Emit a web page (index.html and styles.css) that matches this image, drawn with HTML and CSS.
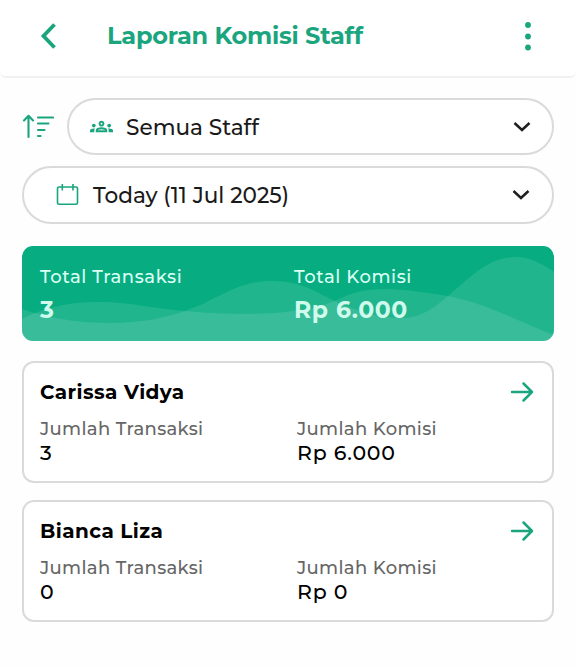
FILE: index.html
```html
<!DOCTYPE html>
<html lang="id">
<head>
<meta charset="utf-8">
<title>Laporan Komisi Staff</title>
<link rel="stylesheet" href="styles.css">
</head>
<body>
<header class="topbar">
  <svg class="back" width="18" height="28" viewBox="0 0 18 28"><path d="M15.500 2.500 4.500 14l11 11.500"/></svg>
  <h1>Laporan Komisi Staff</h1>
  <svg class="more" width="8" height="30" viewBox="0 0 8 30"><circle cx="4" cy="4" r="2.9"/><circle cx="4" cy="15.500" r="2.9"/><circle cx="4" cy="26.500" r="2.9"/></svg>
</header>
<main>
  <div class="filters">
    <svg class="sort" width="32" height="26" viewBox="0 0 32 26"><path d="M6.500 23V2.500M2 6.500 6.500 1.800 11 6.500M16 3.500h15M16 9.500h10.500M16 16h6.500M16 22h2.500"/></svg>
    <div class="pill pill-staff">
      <svg class="group" width="23" height="23" viewBox="0 0 24 24"><path d="M4 13c1.100 0 2-.9 2-2s-.9-2-2-2-2 .9-2 2 .9 2 2 2zm1.130 1.100C4.760 14.040 4.390 14 4 14c-.99 0-1.930.21-2.780.58C.48 14.900 0 15.620 0 16.430V18h4.500v-1.610c0-.83.23-1.610.63-2.290zM20 13c1.100 0 2-.9 2-2s-.9-2-2-2-2 .9-2 2 .9 2 2 2zm4 3.430c0-.81-.48-1.530-1.220-1.850A6.950 6.950 0 0 0 20 14c-.39 0-.76.04-1.130.1.400.68.63 1.460.63 2.290V18H24v-1.570zM16.240 13.650A10.400 10.400 0 0 0 12 12.750c-1.630 0-3.070.39-4.240.9A2.990 2.990 0 0 0 6 16.390V18h12v-1.610c0-1.180-.68-2.260-1.760-2.740zM8.070 16c.09-.23.130-.39.910-.69A8.300 8.300 0 0 1 12 14.750c1.080 0 2.050.2 3.020.56.770.3.810.46.910.69H8.070zM12 8a1 1 0 1 1 0 2 1 1 0 0 1 0-2m0-2C10.340 6 9 7.340 9 9s1.340 3 3 3 3-1.340 3-3-1.340-3-3-3z"/></svg>
      <span>Semua Staff</span>
      <svg class="chev" width="18" height="12" viewBox="0 0 18 12"><path d="m1.500 2 7.500 7 7.500-7"/></svg>
    </div>
  </div>
  <div class="pill pill-date">
    <svg class="calendar" width="24" height="24" viewBox="0 0 24 24"><rect x="2.500" y="4" width="20" height="17.300" rx="1.500"/><path d="M7.300 1v6.500M18 1v6.500"/></svg>
    <span>Today (11 Jul 2025)</span>
    <svg class="chev" width="18" height="12" viewBox="0 0 18 12"><path d="m1.500 2 7.500 7 7.500-7"/></svg>
  </div>
  <section class="summary">
    <svg class="waves" viewBox="22 246 532 95" preserveAspectRatio="none"><path d="M22 319C48 306 70 302 100 302C130 302 155 309 185 311C215 314 255 315 285 312C310 309 322 306 335 301C350 293 364 289 385 289C406 289 428 293 448 296C485 303 525 324 554 335V341H22Z"/><path d="M22 309C45 317 75 323 110 323C142 323 164 318 185 311C218 300 236 281 272 281C302 281 317 293 335 301C357 312 382 318 403 318C423 317 435 307 448 296C470 278 488 257 516 257C531 257 544 265 554 272V341H22Z"/></svg>
    <div><p class="s-label">Total Transaksi</p><p class="s-value">3</p></div>
    <div><p class="s-label">Total Komisi</p><p class="s-value">Rp 6.000</p></div>
  </section>
  <article class="card">
    <div class="head"><h2>Carissa Vidya</h2><svg class="arrow" width="24" height="22" viewBox="0 0 24 22"><path d="M2 11h20M13.500 2.500 22 11l-8.500 8.500"/></svg></div>
    <div class="stats">
      <div><p class="label">Jumlah Transaksi</p><p class="value">3</p></div>
      <div><p class="label">Jumlah Komisi</p><p class="value">Rp 6.000</p></div>
    </div>
  </article>
  <article class="card">
    <div class="head"><h2>Bianca Liza</h2><svg class="arrow" width="24" height="22" viewBox="0 0 24 22"><path d="M2 11h20M13.500 2.500 22 11l-8.500 8.500"/></svg></div>
    <div class="stats">
      <div><p class="label">Jumlah Transaksi</p><p class="value">0</p></div>
      <div><p class="label">Jumlah Komisi</p><p class="value">Rp 0</p></div>
    </div>
  </article>
</main>
</body>
</html>
```
FILE: styles.css
```css
* { box-sizing: border-box; margin: 0; padding: 0; }
body { background: #fefefe; color: #000; font-family: Montserrat, Inter, sans-serif; white-space: nowrap; }
svg { display: block; flex: none; fill: none; stroke: #1aa57e; }
.topbar { display: flex; align-items: center; height: 78px; padding: 0 44px 4px 39px; background: #fff; border-bottom: 2px solid #f1f1f1; border-radius: 0 0 6px 6px; }
.back { stroke-width: 3.8; }
h1 { flex: 1; margin-left: 50px; font-size: 24px; line-height: 30px; font-weight: 700; letter-spacing: -.22px; color: #1aa57e; }
.more { fill: #1aa57e; stroke: none; }
main { padding: 20px 22px 0; }
.filters { display: flex; align-items: center; gap: 13px; }
.sort { stroke-width: 2.1; stroke-linecap: round; stroke-linejoin: round; }
.pill { display: flex; align-items: center; border: 2px solid #dadada; border-radius: 29px; background: #fff; color: #1a1a1a; font-size: 21.600px; font-weight: 500; }
.pill span { flex: 1; }
.pill-staff { flex: 1; height: 57px; padding: 0 21px 0 21px; }
.group { fill: #1aa57e; stroke: none; margin-right: 13px; }
.pill-date { height: 58px; margin-top: 11px; padding: 0 22px 0 31px; }
.calendar { stroke-width: 1.6; margin-right: 14px; }
.chev { stroke: #1f1f1f; stroke-width: 2.5; }
.summary { position: relative; display: grid; grid-template-columns: 254px 1fr; height: 95px; margin-top: 22px; padding: 19px 18px 0; border-radius: 11px; overflow: hidden; background: #07ad80; color: #dcfff4; }
.summary div { position: relative; }
.waves { position: absolute; inset: 0; width: 100%; height: 100%; fill: #fff; fill-opacity: .105; stroke: none; }
.s-label { font-size: 18px; line-height: 24px; font-weight: 500; letter-spacing: .6px; }
.s-value { margin-top: 6px; font-size: 23.500px; line-height: 30px; font-weight: 700; letter-spacing: .6px; color: #d0fbec; }
.card { height: 122px; margin-top: 20px; padding: 16px 18px 0 16px; border: 2px solid #dadada; border-radius: 12px; background: #fff; }
.card + .card { margin-top: 17px; }
.head { display: flex; justify-content: space-between; align-items: center; height: 26px; }
h2 { font-size: 20px; line-height: 26px; font-weight: 700; letter-spacing: .42px; }
.arrow { stroke-width: 2.5; stroke-linecap: round; stroke-linejoin: round; }
.stats { display: grid; grid-template-columns: 257px 1fr; margin-top: 12px; }
.label { font-size: 18px; line-height: 24px; font-weight: 500; letter-spacing: .35px; color: #666; }
.value { margin-top: -1px; font-size: 20.500px; line-height: 26px; font-weight: 500; letter-spacing: .75px; }
```
